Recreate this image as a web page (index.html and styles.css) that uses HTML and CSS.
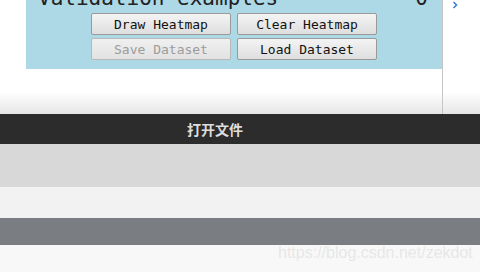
FILE: index.html
```html
<!DOCTYPE html>
<html>
<head>
<meta charset="utf-8">
<link rel="stylesheet" href="styles.css">
</head>
<body>
<div class="top">
  <div class="gutter"></div>
  <div class="main">
    <div class="panel">
      <div class="heading"><span>Validation examples</span><span>0</span></div>
      <div class="buttons">
        <button class="btn">Draw Heatmap</button>
        <button class="btn">Clear Heatmap</button>
        <button class="btn" disabled>Save Dataset</button>
        <button class="btn">Load Dataset</button>
      </div>
    </div>
  </div>
  <div class="side">
    <svg class="chev" width="6" height="8" viewBox="0 0 6 8"><polyline points="1.5,1 4.5,4 1.5,7" fill="none" stroke="#3b82d6" stroke-width="1.6"/></svg>
  </div>
</div>
<div class="titlebar">打开文件</div>
<div class="band b1"></div>
<div class="band b2"></div>
<div class="band b3"></div>
<div class="band b4"><span class="wm">https://blog.csdn.net/zekdot</span></div>
</body>
</html>
```
FILE: styles.css
```css
html, body { margin: 0; padding: 0; }
body { width: 480px; height: 272px; overflow: hidden; background: #fff; font-family: "DejaVu Sans Mono", monospace; }
.top { height: 114px; display: flex; background: linear-gradient(to bottom, #fff 0, #fff 92px, #e6e6e6 114px); }
.gutter { width: 26px; flex: none; }
.main { width: 416px; flex: none; border-right: 1px solid #c6c6c6; }
.panel { background: #add8e6; height: 69px; overflow: hidden; display: flex; flex-direction: column; }
.heading { display: flex; justify-content: space-between; font-size: 21px; line-height: 21px; color: #222; margin: -12px 14px 4px 12px; }
.buttons { display: grid; grid-template-columns: 140px 140px; gap: 3px 6px; justify-content: center; }
.btn { height: 22px; margin: 0; padding: 0; font-family: "DejaVu Sans Mono", monospace; font-size: 13px; color: #111; background: linear-gradient(to bottom, #f4f4f4, #dedede); border: 1px solid #9a9a9a; border-radius: 2px; }
.btn:disabled { color: #9c9c9c; border-color: #b8b8b8; background: linear-gradient(to bottom, #f0f0f0, #e2e2e2); }
.side { flex: 1; padding: 1px 0 0 9px; }
.chev { display: block; }
.titlebar { height: 30px; background: #2c2c2c; color: #dedede; font-family: "Noto Sans CJK SC", sans-serif; font-weight: bold; font-size: 14px; line-height: 30px; padding-left: 187px; }
.band { width: 100%; }
.b1 { height: 43px; background: #d8d8d8; }
.b2 { height: 31px; background: #f2f2f2; }
.b3 { height: 27px; background: #7a7e83; }
.b4 { height: 27px; background: #f8f8f8; position: relative; }
.wm { position: absolute; left: 278px; top: -1px; font-family: "Liberation Sans", Arial, sans-serif; font-size: 16px; color: #e6e6e6; text-shadow: 0 0 1px #fff; }
```
